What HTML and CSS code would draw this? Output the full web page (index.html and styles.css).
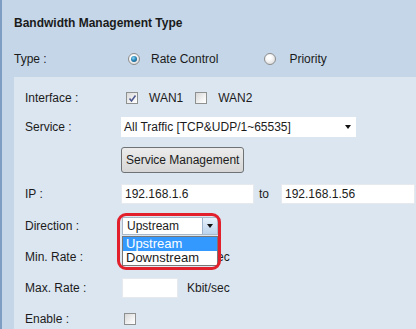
FILE: index.html
```html
<!DOCTYPE html>
<html>
<head>
<meta charset="utf-8">
<link rel="stylesheet" href="styles.css">
</head>
<body>
<div class="page">
  <div class="head">
    <div class="title">Bandwidth Management Type</div>
    <div class="typerow">
      <span class="tlabel">Type :</span>
      <span class="radio on"></span><span class="rlabel">Rate Control</span>
      <span class="radio off second"></span><span class="rlabel">Priority</span>
    </div>
  </div>
  <div class="panel">
    <div class="row r-if">
      <span class="lbl">Interface :</span>
      <div class="ctl">
        <span class="cb checked first"><svg width="9" height="9" viewBox="0 0 9 9"><path d="M1.5 4.5 L3.5 7 L7.5 1.5" fill="none" stroke="#4b5690" stroke-width="1.5"/></svg></span>
        <span class="cblabel">WAN1</span>
        <span class="cb second"></span>
        <span class="cblabel">WAN2</span>
      </div>
    </div>
    <div class="row r-svc">
      <span class="lbl">Service :</span>
      <div class="ctl">
        <div class="select wide"><span>All Traffic [TCP&amp;UDP/1~65535]</span><span class="arrow"></span></div>
      </div>
    </div>
    <div class="row r-btn">
      <span class="lbl"></span>
      <div class="ctl"><span class="btn">Service Management</span></div>
    </div>
    <div class="row r-ip">
      <span class="lbl">IP :</span>
      <div class="ctl">
        <span class="input ip1">192.168.1.6</span>
        <span class="to">to</span>
        <span class="input ip2">192.168.1.56</span>
      </div>
    </div>
    <div class="row r-dir">
      <span class="lbl">Direction :</span>
      <div class="ctl">
        <div class="dirwrap">
          <div class="dirsel"><span class="dirtext">Upstream</span><span class="dirbtn"><span class="arrow"></span></span></div>
          <div class="list">
            <div class="opt sel">Upstream</div>
            <div class="opt">Downstream</div>
          </div>
          <div class="ring"></div>
        </div>
      </div>
    </div>
    <div class="row r-min">
      <span class="lbl">Min. Rate :</span>
      <div class="ctl"><span class="input rate"></span><span class="unit hidden-part">Kbit/s</span><span class="unit-tail">ec</span></div>
    </div>
    <div class="row r-max">
      <span class="lbl">Max. Rate :</span>
      <div class="ctl"><span class="input rate"></span><span class="unit">Kbit/sec</span></div>
    </div>
    <div class="row r-en">
      <span class="lbl">Enable :</span>
      <div class="ctl"><span class="cb en"></span></div>
    </div>
  </div>
</div>
</body>
</html>
```

FILE: styles.css
```css
html, body {
  margin: 0;
  padding: 0;
  height: 329px;
  overflow: hidden;
}
body {
  font-family: "Liberation Sans", Arial, sans-serif;
  font-size: 12px;
  color: #1b1b1b;
  background: #c4d6e8;
}
.page {
  border-left: 2px solid #7d9dc2;
  height: 329px;
  overflow: hidden;
  background: #c4d6e8;
}
.head {
  padding: 16px 0 8px 12px;
}
.title {
  font-weight: bold;
  line-height: 14px;
}
.typerow {
  margin-top: 19px;
  height: 20px;
  display: flex;
  align-items: center;
  line-height: 14px;
}
.tlabel {
  width: 114px;
}
.radio {
  position: relative;
  box-sizing: border-box;
  width: 12px;
  height: 12px;
  border-radius: 50%;
  border: 1px solid #8d8d8d;
  background: radial-gradient(circle at 40% 35%, #ffffff 20%, #d2d2d2 100%);
  margin-right: 11px;
}
.radio.second {
  margin-left: 46px;
  margin-right: 13px;
}
.radio.on::after {
  content: "";
  position: absolute;
  left: 2px;
  top: 2px;
  width: 6px;
  height: 6px;
  border-radius: 50%;
  background: radial-gradient(circle at 40% 35%, #8fd8f4 0%, #2a88bb 45%, #0d3f6a 100%);
}
.panel {
  margin-left: 12px;
  background: #dbe6f1;
  padding: 7px 0 0 11px;
  height: 252px;
  box-sizing: border-box;
}
.row {
  display: flex;
  align-items: center;
  line-height: 14px;
}
.lbl {
  width: 96px;
  flex: none;
}
.ctl {
  display: flex;
  align-items: center;
}
.r-if { height: 28px; }
.r-svc { height: 30px; }
.r-btn { height: 36px; }
.r-ip { height: 32px; }
.r-dir { height: 31px; position: relative; z-index: 2; }
.r-min { height: 32px; }
.r-max { height: 30px; }
.r-en {
  height: 26px;
  box-sizing: border-box;
  align-items: flex-start;
  padding-top: 9px;
}
.r-en .ctl { padding-top: 1px; }

.cb {
  box-sizing: border-box;
  width: 12px;
  height: 12px;
  border: 1px solid #8f9090;
  background: linear-gradient(135deg, #d8d8d8 0%, #f6f6f6 70%, #ffffff 100%);
  display: flex;
  align-items: center;
  justify-content: center;
}
.cb.first { margin-left: 5px; }
.cb.second { margin-left: 12px; }
.cb.en { margin-left: 3px; }
.cblabel { margin-left: 11px; }

.select {
  box-sizing: border-box;
  height: 20px;
  background: #fff;
  display: flex;
  align-items: center;
  justify-content: space-between;
  padding: 0 5px 0 3px;
}
.select.wide { width: 235px; }
.arrow {
  width: 0;
  height: 0;
  border-left: 3.5px solid transparent;
  border-right: 3.5px solid transparent;
  border-top: 4px solid #111;
}
.btn {
  box-sizing: border-box;
  width: 123px;
  height: 26px;
  border: 1px solid #6f7275;
  border-radius: 3px;
  background: linear-gradient(#ececec, #d6d6d6);
  display: flex;
  align-items: center;
  padding-left: 4px;
}
.input {
  box-sizing: border-box;
  height: 20px;
  background: #fff;
  border: 1px solid #e6eaee;
  display: flex;
  align-items: center;
  padding-left: 3px;
}
.ip1 { width: 133px; }
.to { margin: 0 12px 0 5px; }
.ip2 { width: 134px; }
.rate { width: 56px; margin-left: 1px; }
.unit { margin-left: 9px; }
.hidden-part { visibility: hidden; }

.dirwrap {
  position: relative;
  margin-left: 1px;
}
.dirsel {
  box-sizing: border-box;
  width: 96px;
  height: 18px;
  background: #fff;
  border: 1px solid #a9b9ca;
  display: flex;
  align-items: center;
  justify-content: space-between;
}
.dirtext { padding-left: 4px; }
.dirbtn {
  box-sizing: border-box;
  width: 15px;
  height: 16px;
  background: linear-gradient(#e6f0fa, #bcd4ec);
  border-left: 1px solid #9fb5cd;
  display: flex;
  align-items: center;
  justify-content: center;
}
.list {
  position: absolute;
  left: 0;
  top: 19px;
  box-sizing: border-box;
  width: 96px;
  background: #fff;
  border: 1px solid #777;
  z-index: 3;
}
.opt {
  height: 14px;
  line-height: 14px;
  padding-left: 3px;
  font-size: 13px;
}
.opt.sel {
  background: #3399ff;
  color: #fff;
}
.ring {
  position: absolute;
  left: -5px;
  top: -4px;
  box-sizing: border-box;
  width: 104px;
  height: 57px;
  border: 3px solid #e2202c;
  border-radius: 9px;
  z-index: 4;
}
```
